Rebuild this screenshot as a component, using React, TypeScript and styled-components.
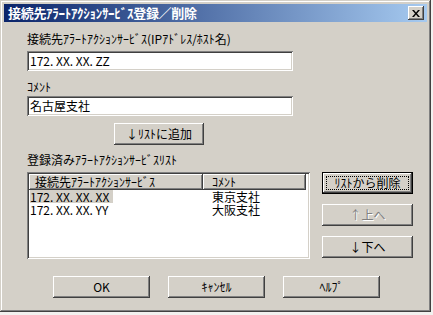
import React from "react";
import styled, { createGlobalStyle, css } from "styled-components";

const GlobalStyle = createGlobalStyle`
  html, body {
    margin: 0;
    padding: 0;
    background: #f2f1ef;
  }
  body {
    font-family: "Noto Sans CJK JP", "Noto Sans", sans-serif;
    font-size: 12px;
    color: #000;
  }
`;

// classic 3d edges
const raised = css`
  background: #d4d0c8;
  box-shadow: inset -1px -1px #404040, inset 1px 1px #ffffff,
    inset -2px -2px #808080, inset 2px 2px #d4d0c8;
`;

const sunken = css`
  box-shadow: inset 1px 1px #808080, inset -1px -1px #ffffff,
    inset 2px 2px #404040, inset -2px -2px #d4d0c8;
`;

const Window = styled.div`
  width: 431px;
  height: 312px;
  box-sizing: border-box;
  padding: 4px;
  background: #d4d0c8;
  box-shadow: inset -1px -1px #404040, inset 1px 1px #d4d0c8,
    inset -2px -2px #808080, inset 2px 2px #ffffff;
  display: flex;
  flex-direction: column;
`;

const TitleBar = styled.div`
  height: 18px;
  display: flex;
  align-items: center;
  justify-content: space-between;
  padding: 0 3px 0 4px;
  background: linear-gradient(to right, #0a246a, #a6caf0);
`;

const Title = styled.span`
  color: #fff;
  font-weight: bold;
  font-size: 13px;
  letter-spacing: -0.3px;
  line-height: 18px;
  white-space: nowrap;
`;

const CloseButton = styled.div`
  ${raised}
  width: 16px;
  height: 14px;
  display: flex;
  align-items: center;
  justify-content: center;
`;

const Body = styled.div`
  padding: 10px 0 0 23px;
  display: flex;
  flex-direction: column;
  align-items: flex-start;
`;

const Label = styled.div<{ $top?: number }>`
  line-height: 14px;
  height: 14px;
  white-space: nowrap;
  margin-top: ${({ $top }) => $top ?? 0}px;
`;

const TextBox = styled.div<{ $top: number }>`
  ${sunken}
  width: 266px;
  height: 20px;
  box-sizing: border-box;
  padding: 0 3px;
  background: #fff;
  line-height: 20px;
  margin-top: ${({ $top }) => $top}px;
  white-space: nowrap;
`;

const Button = styled.div<{ $width: number; $default?: boolean; $disabled?: boolean }>`
  ${raised}
  position: relative;
  width: ${({ $width }) => $width}px;
  height: 22px;
  box-sizing: border-box;
  display: flex;
  align-items: center;
  justify-content: center;
  line-height: 14px;
  white-space: nowrap;
  ${({ $default }) =>
    $default &&
    css`
      box-shadow: inset 0 0 0 1px #000, inset -2px -2px #404040,
        inset 2px 2px #ffffff, inset -3px -3px #808080;
      &::after {
        content: "";
        position: absolute;
        inset: 4px;
        border: 1px dotted #000;
      }
    `}
  ${({ $disabled }) =>
    $disabled &&
    css`
      color: #808080;
      text-shadow: 1px 1px #ffffff;
    `}
`;

const AddButton = styled(Button)`
  margin: 7px 0 0 87px;
`;

const ListRow = styled.div`
  display: flex;
  align-items: flex-start;
  margin-top: 5px;
`;

const ListBox = styled.div`
  ${sunken}
  width: 283px;
  height: 87px;
  box-sizing: border-box;
  padding: 2px;
  background: #fff;
`;

const HeaderRow = styled.div`
  display: flex;
  height: 16px;
`;

const ColumnHeader = styled.div<{ $width: number; $pad: number }>`
  ${raised}
  box-shadow: inset -1px -1px #404040, inset 1px 1px #ffffff, inset -2px -2px #808080;
  width: ${({ $width }) => $width}px;
  box-sizing: border-box;
  padding-left: ${({ $pad }) => $pad}px;
  line-height: 16px;
  white-space: nowrap;
  overflow: hidden;
`;

const ItemRow = styled.div`
  display: flex;
  height: 13px;
  line-height: 13px;
`;

const Cell = styled.div<{ $width: number; $pad: number }>`
  width: ${({ $width }) => $width}px;
  padding-left: ${({ $pad }) => $pad}px;
  box-sizing: border-box;
  white-space: nowrap;
`;

const Selected = styled.span`
  display: inline-block;
  background: #d4d0c8;
  padding-right: 4px;
`;

const SideButtons = styled.div`
  display: flex;
  flex-direction: column;
  gap: 10px;
  margin-left: 12px;
`;

const BottomRow = styled.div`
  display: flex;
  gap: 18px;
  margin: 17px 0 0 26px;
`;

const columns = [
  { title: "接続先ｱﾗｰﾄｱｸｼｮﾝｻｰﾋﾞｽ", width: 174, pad: 6, cellPad: 1 },
  { title: "ｺﾒﾝﾄ", width: 103, pad: 9, cellPad: 9 },
];

const items = [
  { address: "172. XX. XX. XX", comment: "東京支社", selected: true },
  { address: "172. XX. XX. YY", comment: "大阪支社", selected: false },
];

function App() {
  return (
    <>
      <GlobalStyle />
      <Window>
        <TitleBar>
          <Title>接続先ｱﾗｰﾄｱｸｼｮﾝｻｰﾋﾞｽ登録／削除</Title>
          <CloseButton>
            <svg width="8" height="7" viewBox="0 0 8 7">
              <path d="M0 0h2l2 2.5L6 0h2L5 3.5 8 7H6L4 4.5 2 7H0l3-3.5z" fill="#000" />
            </svg>
          </CloseButton>
        </TitleBar>
        <Body>
          <Label>接続先ｱﾗｰﾄｱｸｼｮﾝｻｰﾋﾞｽ(IPｱﾄﾞﾚｽ/ﾎｽﾄ名)</Label>
          <TextBox $top={5}>172. XX. XX. ZZ</TextBox>
          <Label $top={9}>ｺﾒﾝﾄ</Label>
          <TextBox $top={2}>名古屋支社</TextBox>
          <AddButton $width={90}>↓ﾘｽﾄに追加</AddButton>
          <Label $top={8}>登録済みｱﾗｰﾄｱｸｼｮﾝｻｰﾋﾞｽﾘｽﾄ</Label>
          <ListRow>
            <ListBox>
              <HeaderRow>
                {columns.map((c) => (
                  <ColumnHeader key={c.title} $width={c.width} $pad={c.pad}>
                    {c.title}
                  </ColumnHeader>
                ))}
              </HeaderRow>
              {items.map((item) => (
                <ItemRow key={item.address}>
                  <Cell $width={columns[0].width} $pad={columns[0].cellPad}>
                    {item.selected ? <Selected>{item.address}</Selected> : item.address}
                  </Cell>
                  <Cell $width={columns[1].width} $pad={columns[1].cellPad}>
                    {item.comment}
                  </Cell>
                </ItemRow>
              ))}
            </ListBox>
            <SideButtons>
              <Button $width={91} $default>
                ﾘｽﾄから削除
              </Button>
              <Button $width={91} $disabled>
                ↑上へ
              </Button>
              <Button $width={91}>↓下へ</Button>
            </SideButtons>
          </ListRow>
          <BottomRow>
            <Button $width={97}>OK</Button>
            <Button $width={97}>ｷｬﾝｾﾙ</Button>
            <Button $width={97}>ﾍﾙﾌﾟ</Button>
          </BottomRow>
        </Body>
      </Window>
    </>
  );
}

export default App;
